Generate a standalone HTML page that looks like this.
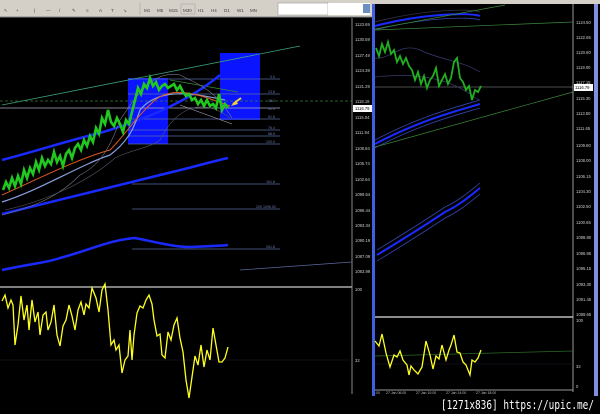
<!DOCTYPE html>
<html><head><meta charset="utf-8"><style>
html,body{margin:0;padding:0;background:#000;}
svg{display:block;font-family:"Liberation Sans",sans-serif;}
</style></head><body>
<svg width="600" height="414" viewBox="0 0 600 414" xmlns="http://www.w3.org/2000/svg">
<rect width="600" height="414" fill="#000"/>
<rect x="0" y="0" width="600" height="4" fill="#d4d0c8"/>
<rect x="0" y="0" width="372" height="17" fill="#d4d0c8"/>
<line x1="0" y1="17" x2="372" y2="17" stroke="#808080"/>
<rect x="278" y="3" width="50" height="12" fill="#fff" stroke="#888" stroke-width="0.5"/>
<rect x="328" y="3" width="42" height="12" fill="#fff"/>
<rect x="363" y="4" width="7" height="9" fill="#6a8fc0"/>
<g fill="#444" font-size="4.5">
<text x="4" y="12">↖</text><text x="16" y="12">+</text><text x="34" y="12">|</text><text x="46" y="12">—</text><text x="59" y="12">/</text><text x="72" y="12">✎</text><text x="86" y="12">≡</text><text x="99" y="12">A</text><text x="111" y="12">T</text><text x="123" y="12">↘</text>
<text x="144" y="12">M1</text><text x="157" y="12">M5</text><text x="169" y="12">M15</text><text x="183" y="12">M30</text><text x="198" y="12">H1</text><text x="211" y="12">H4</text><text x="224" y="12">D1</text><text x="237" y="12">W1</text><text x="250" y="12">MN</text>
</g>
<line x1="140" y1="3" x2="140" y2="15" stroke="#999" stroke-width="0.5"/>
<rect x="181" y="4" width="14" height="10" fill="none" stroke="#999" stroke-width="0.5"/>

<line x1="352" y1="18" x2="352" y2="394" stroke="#888"/>
<line x1="0" y1="287" x2="352" y2="287" stroke="#aaa" stroke-width="1.5"/>
<g fill="#ccc" font-size="4.2">
<text x="355" y="26">1123.69</text><text x="355" y="41">1130.59</text><text x="355" y="57">1127.49</text><text x="355" y="72">1124.39</text><text x="355" y="88">1121.29</text><text x="355" y="103">1118.19</text><text x="355" y="119">1115.04</text><text x="355" y="134">1111.94</text><text x="355" y="150">1108.84</text><text x="355" y="165">1105.74</text><text x="355" y="181">1102.64</text><text x="355" y="196">1099.54</text><text x="355" y="212">1096.44</text><text x="355" y="227">1093.34</text><text x="355" y="242">1090.19</text><text x="355" y="258">1087.09</text><text x="355" y="273">1083.99</text><text x="355" y="291">100</text><text x="355" y="362">32</text>
</g>
<rect x="353" y="105" width="19" height="7" fill="#fff"/><text x="355" y="110" font-size="4.2" fill="#000">1116.79</text>

<rect x="128" y="78" width="40" height="66" fill="#0a14ff"/>
<rect x="220" y="53" width="40" height="67" fill="#0a14ff"/>
<g stroke="#5a6aa0" stroke-width="0.7">
<line x1="128" y1="79" x2="280" y2="79"/><line x1="128" y1="94" x2="280" y2="94"/><line x1="0" y1="101" x2="352" y2="101" stroke="#3a7a3a" stroke-dasharray="3,2"/><line x1="0" y1="108" x2="280" y2="108" stroke="#aab"/><line x1="128" y1="119" x2="280" y2="119"/><line x1="128" y1="130" x2="280" y2="130"/><line x1="128" y1="136" x2="280" y2="136"/><line x1="128" y1="144" x2="280" y2="144"/><line x1="132" y1="184" x2="280" y2="184"/><line x1="132" y1="209" x2="280" y2="209"/><line x1="132" y1="249" x2="280" y2="249"/>
</g>
<g fill="#6a7ab0" font-size="3.6">
<text x="270" y="78">0.0</text><text x="268" y="93">23.6</text><text x="268" y="102">38.2</text><text x="268" y="110">50.0</text><text x="268" y="118">61.8</text><text x="268" y="129">76.4</text><text x="268" y="135">88.6</text><text x="266" y="143">100.0</text><text x="266" y="183">161.8</text><text x="256" y="208">200 1096.52</text><text x="266" y="248">261.8</text>
</g>
<line x1="2" y1="105" x2="300" y2="46" stroke="#3aa37a" stroke-width="0.8"/>
<line x1="170" y1="80" x2="238" y2="92" stroke="#3a8a3a" stroke-width="0.7"/>
<line x1="180" y1="105" x2="232" y2="124" stroke="#aab" stroke-width="0.6"/>
<line x1="240" y1="270" x2="352" y2="262" stroke="#5a6aa0" stroke-width="0.7"/>
<path d="M2,160 C40,150 70,140 100,133 C150,118 190,100 220,75" stroke="#1a2aff" stroke-width="2.5" fill="none"/>
<path d="M2,214 C60,200 120,185 160,175 C190,168 210,162 228,158" stroke="#1a2aff" stroke-width="2.5" fill="none"/>
<path d="M2,270 C30,264 50,262 60,258 C90,250 110,240 135,238 C160,243 175,247 190,247 C210,246 220,246 228,245" stroke="#1a2aff" stroke-width="2.5" fill="none"/>
<path d="M2,202 C40,190 80,165 110,155 C130,140 135,125 140,110 C160,85 200,95 225,100" stroke="#8aa0e0" stroke-width="1.2" fill="none"/>
<path d="M2,195 C40,178 80,158 110,150 C125,135 135,118 155,100 C175,85 200,95 230,106" stroke="#e05a20" stroke-width="1" fill="none"/>
<path d="M2,215 C40,205 60,195 80,175 C100,165 110,148 120,120 C140,90 155,70 180,75 C200,85 215,90 232,118" stroke="#778" stroke-width="0.6" fill="none"/>
<path d="M5,210 C50,200 90,180 115,158 C130,150 150,148 160,140 C175,110 200,95 230,118" stroke="#556" stroke-width="0.6" fill="none"/>
<polyline points="3,190 6,182 9,188 12,178 15,186 18,176 21,184 24,170 27,178 30,168 33,174 36,162 39,170 42,158 45,166 48,160 51,164 54,152 57,162 60,156 63,166 66,154 69,150 72,158 75,148 78,144 81,150 84,140 87,146 90,136 93,142 96,128 99,134 102,118 105,124 108,110 111,122 114,126 117,118 120,124 123,132 126,120 129,124 132,112 135,100 138,88 141,94 144,84 147,88 150,78 153,86 156,82 159,90 162,86 165,84 168,88 171,86 174,84 177,90 180,86 183,92 186,96 189,94 192,100 195,98 198,104 201,100 204,106 207,100 210,106 213,104 216,108 219,94 222,110 225,104 228,108" stroke="#20c820" stroke-width="2.6" fill="none"/>
<line x1="241" y1="98" x2="233" y2="104" stroke="#f0d040" stroke-width="2"/>
<polygon points="231,106 236,100 238,104" fill="#f0d040"/>

<line x1="0" y1="360" x2="352" y2="360" stroke="#223" stroke-width="0.6"/>
<polyline points="2,301 5,295 8,308 11,300 13,305 15,345 18,325 21,296 24,320 27,305 29,330 32,300 35,322 38,312 40,335 43,315 46,312 48,330 51,322 54,305 57,335 60,346 63,326 66,320 69,305 72,316 75,330 78,310 81,302 84,315 86,304 89,308 92,288 96,298 99,312 102,290 105,284 108,310 111,345 114,340 116,350 119,345 122,373 125,360 128,356 130,330 132,360 134,335 137,313 140,306 143,308 146,300 149,295 152,304 154,320 157,336 160,334 162,355 165,358 168,332 171,340 174,325 177,318 180,338 183,352 186,380 189,398 192,377 195,356 198,365 201,345 204,367 207,350 210,360 213,328 216,345 219,362 222,362 225,358 228,347" stroke="#ffff20" stroke-width="1.3" fill="none"/>

<rect x="372" y="4" width="3" height="392" fill="#4060e0"/>
<rect x="594" y="4" width="4" height="392" fill="#8090e0"/>
<line x1="573" y1="4" x2="573" y2="392" stroke="#999"/>
<line x1="375" y1="317" x2="573" y2="317" stroke="#bbb" stroke-width="1.5"/>
<line x1="375" y1="390" x2="573" y2="390" stroke="#999"/>
<g fill="#ccc" font-size="4.2">
<text x="576" y="24">1124.50</text><text x="576" y="39">1122.65</text><text x="576" y="54">1120.80</text><text x="576" y="69">1119.00</text><text x="576" y="84">1117.15</text><text x="576" y="100">1115.30</text><text x="576" y="115">1113.50</text><text x="576" y="130">1111.65</text><text x="576" y="147">1109.80</text><text x="576" y="162">1108.00</text><text x="576" y="178">1106.15</text><text x="576" y="193">1104.30</text><text x="576" y="208">1102.50</text><text x="576" y="224">1100.65</text><text x="576" y="239">1098.80</text><text x="576" y="255">1096.95</text><text x="576" y="270">1095.15</text><text x="576" y="286">1093.30</text><text x="576" y="301">1091.45</text><text x="576" y="316">1089.65</text><text x="576" y="322">100</text><text x="576" y="368">32</text><text x="576" y="388">0</text>
</g>
<rect x="574" y="84" width="19" height="7" fill="#fff"/><text x="575" y="89" font-size="4.2" fill="#000">1116.79</text>
<g fill="#bbb" font-size="3.5"><text x="375" y="394">:00</text><text x="386" y="394">27 Jan 06:00</text><text x="416" y="394">27 Jan 10:00</text><text x="446" y="394">27 Jan 14:00</text><text x="476" y="394">27 Jan 18:00</text></g>
<line x1="375" y1="87" x2="573" y2="87" stroke="#999" stroke-width="0.6"/>
<g fill="none">
<path d="M375,26 C420,14 470,12 480,16" stroke="#1a2aff" stroke-width="2"/>
<path d="M375,22 C420,10 470,8 480,12" stroke="#334" stroke-width="0.8"/>
<path d="M375,30 C420,18 470,16 480,20" stroke="#3344aa" stroke-width="0.8"/>
<path d="M375,144 C420,120 460,110 480,104" stroke="#1a2aff" stroke-width="2"/>
<path d="M375,140 C420,116 460,106 480,100" stroke="#3344aa" stroke-width="0.8"/>
<path d="M375,148 C420,124 460,114 480,108" stroke="#3344aa" stroke-width="0.8"/>
<path d="M377,255 C410,235 430,222 445,212 C460,205 470,196 480,188" stroke="#1a2aff" stroke-width="2"/>
<path d="M377,250 C410,230 430,217 445,207 C460,200 470,191 480,183" stroke="#3344aa" stroke-width="0.8"/>
<path d="M377,261 C410,241 430,228 445,218 C460,211 470,202 480,194" stroke="#3344aa" stroke-width="0.8"/>
<path d="M375,58 C390,60 400,42 420,50 C440,60 460,60 480,72" stroke="#3a3a70" stroke-width="0.7"/>
<path d="M375,77 C420,72 450,80 470,94 C475,98 478,100 480,100" stroke="#3a3a70" stroke-width="0.7"/>
</g>
<line x1="375" y1="29" x2="505" y2="5" stroke="#3a8a3a" stroke-width="0.7"/>
<line x1="375" y1="30" x2="573" y2="22" stroke="#3a8a3a" stroke-width="0.7"/>
<line x1="375" y1="147" x2="573" y2="92" stroke="#3a8a3a" stroke-width="0.7"/>
<polyline points="376,48 379,56 382,44 385,52 388,42 391,54 394,50 397,62 400,56 403,64 406,58 409,66 412,70 415,80 418,72 421,84 424,76 427,88 430,80 433,76 436,68 439,86 442,80 445,74 448,84 451,78 454,62 457,58 460,78 463,82 466,90 469,86 472,100 475,90 478,92 481,86" stroke="#20b020" stroke-width="1.8" fill="none"/>
<line x1="375" y1="356" x2="573" y2="351" stroke="#2a6a2a" stroke-width="0.8"/>
<line x1="375" y1="364" x2="573" y2="364" stroke="#223" stroke-width="0.5"/>
<polyline points="375,341 379,346 382,334 386,353 390,367 394,355 397,357 400,351 403,360 407,365 409,375 411,366 414,370 418,374 422,367 426,341 430,355 433,369 436,356 439,359 442,345 446,360 449,350 451,345 454,335 457,352 460,353 463,362 466,365 468,370 470,375 472,360 475,362 478,358 481,350" stroke="#ffff20" stroke-width="1.3" fill="none"/>
<text x="441" y="409" font-family="'DejaVu Sans Mono','Liberation Mono',monospace" font-size="12" fill="#fff" textLength="153" lengthAdjust="spacingAndGlyphs">[1271x836] https://upic.me/</text>
</svg>
</body></html>
